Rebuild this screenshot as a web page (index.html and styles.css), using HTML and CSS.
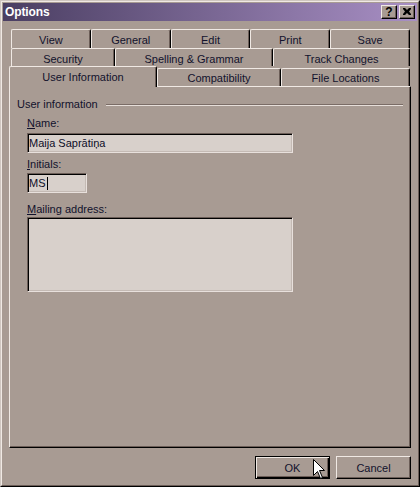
FILE: index.html
```html
<!DOCTYPE html>
<html lang="en">
<head>
<meta charset="utf-8">
<title>Options</title>
<link rel="stylesheet" href="styles.css">
</head>
<body>
<div class="window">
  <div class="frame">
    <div class="titlebar">
      <span class="title">Options</span>
      <div class="caption-buttons">
        <div class="cap-btn help">?</div>
        <div class="cap-btn">
          <svg width="8" height="7" viewBox="0 0 8 7" class="close-glyph">
            <path d="M0 0h2l2 2l2-2h2v1l-2 2.5l2 2.5v1h-2l-2-2l-2 2h-2v-1l2-2.5l-2-2.5z" fill="#000"/>
          </svg>
        </div>
      </div>
    </div>

    <div class="body">
      <div class="tabs">
        <div class="tab-row row-back">
          <div class="tab grow">View</div>
          <div class="tab grow">General</div>
          <div class="tab grow">Edit</div>
          <div class="tab grow">Print</div>
          <div class="tab grow">Save</div>
        </div>
        <div class="tab-row row-mid">
          <div class="tab w-security">Security</div>
          <div class="tab w-spelling">Spelling &amp; Grammar</div>
          <div class="tab w-track">Track Changes</div>
        </div>
        <div class="tab-row row-front">
          <div class="tab active w-user">User Information</div>
          <div class="tab plain w-compat">Compatibility</div>
          <div class="tab plain w-files">File Locations</div>
        </div>
      </div>

      <div class="panel">
        <div class="group-head">
          <span>User information</span>
          <span class="etch"></span>
        </div>
        <div class="fields">
          <div class="label label-name"><u>N</u>ame:</div>
          <div class="edit edit-name">Maija Saprātiņa</div>
          <div class="label label-initials"><u>I</u>nitials:</div>
          <div class="edit edit-initials">MS<span class="caret"></span></div>
          <div class="label label-mail"><u>M</u>ailing address:</div>
          <div class="edit edit-mail"></div>
        </div>
      </div>

      <div class="footer">
        <button class="btn default">OK</button>
        <button class="btn">Cancel</button>
      </div>
    </div>
  </div>

  <svg class="pointer" width="12" height="20" viewBox="0 0 12 20">
    <path d="M0.5 0.5 L0.5 16.5 L4.5 12.5 L7.5 19.5 L9.5 18.5 L6.5 11.5 L11.5 11.5 Z" fill="#fff" stroke="#000" stroke-width="1" stroke-linejoin="miter"/>
  </svg>
</div>
</body>
</html>
```

FILE: styles.css
```css
* {
  box-sizing: border-box;
}

body {
  margin: 0;
  background: #a89b93;
  font-family: "Liberation Sans", Arial, sans-serif;
  font-size: 11px;
  color: #12122c;
}

/* Outer window chrome: two 1px bevel lines plus 1px of face */
.window {
  position: relative;
  width: 420px;
  height: 487px;
  border: 1px solid;
  border-color: #cfc6c0 #000 #000 #cfc6c0;
}

.frame {
  height: 100%;
  display: flex;
  flex-direction: column;
  padding: 1px;
  background: #a89b93;
  border: 1px solid;
  border-color: #f0e9e4 #6b5d57 #6b5d57 #f0e9e4;
}

/* Caption */
.titlebar {
  height: 18px;
  display: flex;
  align-items: center;
  justify-content: space-between;
  padding: 0 2px;
  background: linear-gradient(to right, #4a3e62, #a88fc4);
}

.title {
  color: #fff;
  font-weight: bold;
  font-size: 12px;
  letter-spacing: -0.1px;
}

.caption-buttons {
  display: flex;
  gap: 2px;
}

.cap-btn {
  width: 16px;
  height: 14px;
  display: flex;
  align-items: center;
  justify-content: center;
  background: #a89b93;
  border: 1px solid;
  border-color: #f0e9e4 #000 #000 #f0e9e4;
  box-shadow: inset -1px -1px #6b5d57;
}

.cap-btn.help {
  font-weight: bold;
  font-size: 12px;
  line-height: 12px;
  color: #000;
  padding-bottom: 1px;
}

.close-glyph {
  display: block;
  margin-bottom: 1px;
}

/* Dialog body */
.body {
  flex: 1;
  display: flex;
  flex-direction: column;
  padding: 8px 6px 5px;
}

/* Tab strip: three stacked rows, the front row holds the selected tab */
.tab-row {
  display: flex;
}

.row-back {
  height: 19px;
  margin-left: 2px;
  margin-right: 1px;
}

.row-mid {
  height: 18px;
  margin-left: 2px;
  margin-right: 1px;
}

.row-front {
  height: 20px;
  align-items: flex-end;
}

.tab {
  height: 100%;
  text-align: center;
  padding-top: 3px;
  line-height: 14px;
  white-space: nowrap;
  background: #a89b93;
  border-top: 1px solid #f0e9e4;
  border-left: 1px solid #f0e9e4;
  border-right: 1px solid #000;
  border-radius: 2px 2px 0 0;
  box-shadow: inset -1px 0 #6b5d57;
}

.tab.grow {
  flex: 1;
}

.w-security { width: 104px; }
.w-spelling { width: 158px; }
.w-track { width: 137px; }
.w-user { width: 148px; }
.w-compat { width: 124px; }
.w-files { width: 129px; }

.tab.plain {
  height: 18px;
  padding-top: 2px;
}

.tab.active {
  position: relative;
  z-index: 1;
  height: 21px;
  margin-bottom: -1px;
}

/* Page of the selected tab */
.panel {
  flex: 1;
  padding: 11px 7px;
  border: 1px solid;
  border-color: #f0e9e4 #000 #000 #f0e9e4;
  box-shadow: inset -1px -1px #6b5d57;
}

.group-head {
  display: flex;
  align-items: center;
  gap: 8px;
  line-height: 13px;
}

.etch {
  flex: 1;
  height: 2px;
  border-top: 1px solid #7a6c66;
  border-bottom: 1px solid #e6ded9;
}

.fields {
  margin-left: 10px;
  display: flex;
  flex-direction: column;
  align-items: flex-start;
}

.label {
  line-height: 13px;
}

.label u {
  text-decoration-thickness: 1px;
  text-underline-offset: 1px;
}

.label-name { margin-top: 6px; margin-bottom: 3px; }
.label-initials { margin-top: 5px; margin-bottom: 2px; }
.label-mail { margin-top: 10px; margin-bottom: 1px; }

/* Sunken edit boxes */
.edit {
  height: 20px;
  padding-left: 1px;
  line-height: 16px;
  color: #0e0e28;
  white-space: nowrap;
  background: #d8d0cb;
  border: 1px solid;
  border-color: #6b5d57 #e8e0dc #e8e0dc #6b5d57;
  box-shadow: inset 1px 1px #000, inset -1px -1px #c4bab4;
  display: flex;
  align-items: center;
}

.edit-name { width: 266px; }

.edit-initials { width: 60px; }

.edit-mail {
  width: 266px;
  height: 75px;
}

.caret {
  display: inline-block;
  width: 1px;
  height: 13px;
  margin-left: 1px;
  background: #000;
}

/* Command buttons */
.footer {
  display: flex;
  justify-content: flex-end;
  gap: 6px;
  margin-top: 8px;
}

.btn {
  appearance: none;
  width: 75px;
  height: 23px;
  padding: 0;
  margin: 0;
  font-family: "Liberation Sans", Arial, sans-serif;
  font-size: 11px;
  color: #12122c;
  background: #a89b93;
  border: 1px solid;
  border-color: #f0e9e4 #000 #000 #f0e9e4;
  box-shadow: inset -1px -1px #6b5d57;
}

.btn.default {
  border-color: #000;
  box-shadow: inset 1px 1px #f0e9e4, inset -1px -1px #000, inset -2px -2px #6b5d57;
}

/* Mouse pointer resting over the OK button */
.pointer {
  position: absolute;
  left: 312px;
  top: 458px;
}
```
